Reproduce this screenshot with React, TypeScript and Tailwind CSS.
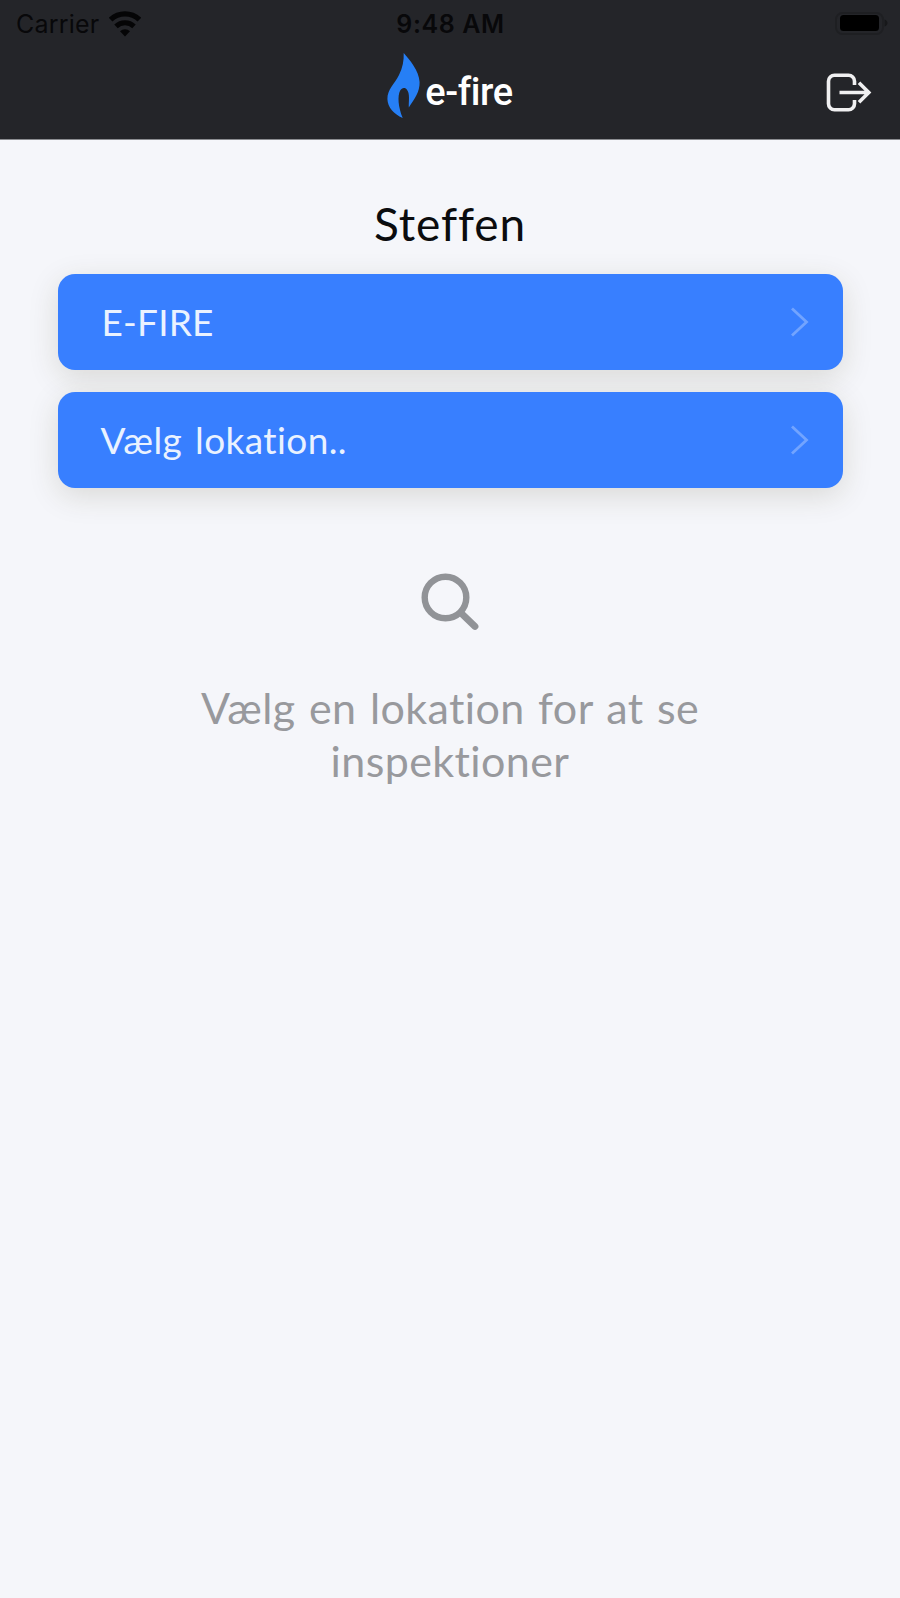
function WifiIcon() {
  return (
    <svg className="h-[26px] w-8" viewBox="0 0 32 26" fill="none" stroke="#050506" strokeWidth="5.4">
      <path d="M1.600 8.600a21 21 0 0 1 28.800 0" />
      <path d="M7 15.400a13 13 0 0 1 18 0" strokeWidth="5" />
      <path d="M16 25.600l-5-5.400a7.200 7.200 0 0 1 10 0z" fill="#050506" stroke="none" />
    </svg>
  );
}

function StatusBar() {
  return (
    <div className="grid h-12 grid-cols-3 items-center pr-[12px] pl-[16px] font-['Inter',sans-serif] text-[25px] leading-[48px] text-[#08080a]">
      <div className="flex items-center gap-[10px]">
        <span className="tracking-[0.2px]">Carrier</span>
        <WifiIcon />
      </div>
      <span className="-ml-[3px] text-center font-semibold tracking-[0.6px] whitespace-nowrap">9:48 AM</span>
      <svg className="h-[26px] w-[56px] justify-self-end" viewBox="0 0 56 26">
        <rect x="4" y="2" width="47" height="21" rx="6.5" fill="none" stroke="#1e1f22" strokeWidth="2" />
        <rect x="8" y="4" width="39" height="16" rx="3.5" fill="#000" />
        <path d="M52.500 8.500c4 1.200 4 5.800 0 7z" fill="#17181a" />
      </svg>
    </div>
  );
}

function Header() {
  return (
    <header className="h-[140px] border-b border-[#8b8c90] bg-[#242529]">
      <StatusBar />
      <div className="grid grid-cols-[1fr_auto_1fr] items-start px-[28px]">
        <span />
        <div className="flex items-start">
          <svg className="mt-[5px] h-[66px] w-[34px]" viewBox="0 0 34 66" fill="#267ff5">
            <path d="M16.700 0C22.500 6.500 32 17.500 32.600 29C32.900 39 27.500 46 21.800 54.500C21.600 48 23.200 40.500 19.800 36.500C17.500 34 14.800 34.800 13.200 37.500C10.300 43 11.200 54 15.700 65C7 61 .6 54.500 .4 46C.3 36.500 7.500 31 12 22C15.700 14.500 17 7.500 16.700 0Z" />
          </svg>
          <span className="mt-[18px] ml-[4px] font-['Roboto',sans-serif] text-[38px] leading-[52px] font-medium tracking-[-0.4px] text-white">e-fire</span>
        </div>
        <svg className="mt-[25px] h-[40px] w-[46px] justify-self-end" viewBox="0 0 46 40" fill="none" stroke="#f0f0f1" strokeWidth="3.6">
          <path d="M28.500 12V8.200a6 6 0 0 0-6-6H8.500a6 6 0 0 0-6 6v22.600a6 6 0 0 0 6 6h14a6 6 0 0 0 6-6V27" />
          <path d="M13.500 19.500H43M33 9.800l9.800 9.700L33 29.200" />
        </svg>
      </div>
    </header>
  );
}

function SelectRow({ label, spacing }: { label: string; spacing: string }) {
  return (
    <button className="flex h-24 w-full items-center justify-between rounded-[17px] bg-[#387fff] pr-[34px] pl-[43px] text-left shadow-[0_8px_30px_rgba(70,60,20,0.15)]">
      <span className={`text-[37px] leading-[44px] text-[#eaf2ff] ${spacing}`}>{label}</span>
      <svg className="h-[30px] w-[19px]" viewBox="0 0 19 30" fill="none" stroke="#72a4ff" strokeWidth="2.8">
        <path d="M2 1.500L16.500 15L2 28.500" />
      </svg>
    </button>
  );
}

export default function App() {
  return (
    <div className="min-h-[1598px] bg-[#f5f6fa] font-['Lato',sans-serif]">
      <Header />
      <main className="flex flex-col items-center px-[57.500px]">
        <h1 className="mt-[56px] text-[46px] leading-[56px] tracking-[0.9px] text-[#0b0c0e]">Steffen</h1>
        <div className="mt-[22px] flex w-full flex-col gap-[21.500px]">
          <SelectRow label="E-FIRE" spacing="pl-[1px] tracking-[0.2px]" />
          <SelectRow label="Vælg lokation.." spacing="tracking-[0.4px] [word-spacing:3px]" />
        </div>
        <svg className="mt-[85.500px] h-[58px] w-[58px]" viewBox="0 0 58 58" fill="none" stroke="#919397">
          <circle cx="24.500" cy="24.500" r="20.800" strokeWidth="6.400" />
          <path d="M40 40L54 53.500" strokeWidth="6.800" strokeLinecap="round" />
        </svg>
        <p className="mt-[50px] w-[520px] text-center text-[43px] leading-[53px] tracking-[0.4px] text-[#98999d] [word-spacing:2px]">
          Vælg en lokation for at se inspektioner
        </p>
      </main>
    </div>
  );
}
